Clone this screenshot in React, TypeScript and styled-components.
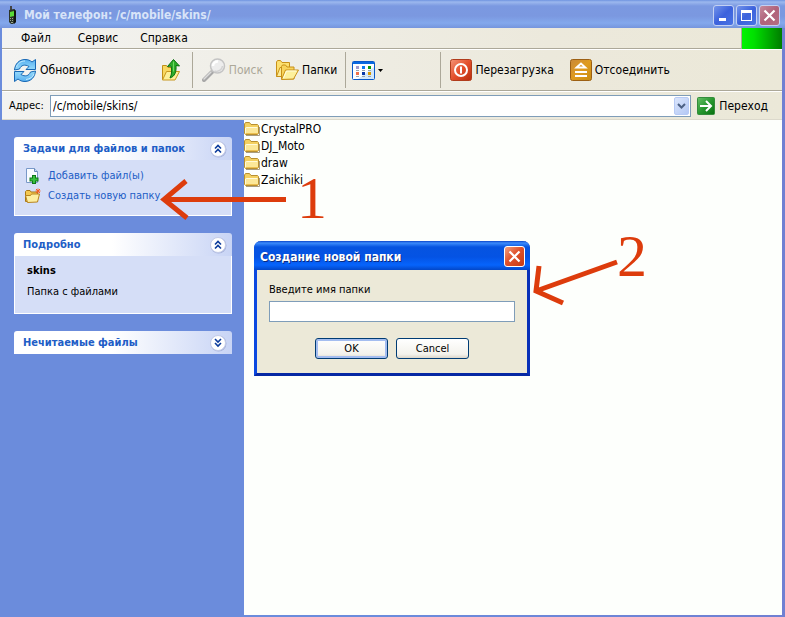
import React from "react";
import styled, { createGlobalStyle, css } from "styled-components";

const GlobalStyle = createGlobalStyle`
  * { box-sizing: border-box; }
  body {
    margin: 0;
    font-family: "DejaVu Sans Condensed", "DejaVu Sans", sans-serif;
    font-size: 12px;
    line-height: 16px;
    color: #000;
  }
  button, input { font: inherit; color: inherit; margin: 0; }
  svg { display: block; flex: none; }
`;

/* ---------- window frame ---------- */

const Window = styled.main`
  display: flex;
  flex-direction: column;
  min-height: 100vh;
  padding: 0 3px 2px 0;
  background: linear-gradient(90deg, #6b8cdc 50%, #7080d2);
`;

const TitleBar = styled.header`
  display: flex;
  align-items: center;
  height: 28px;
  margin-right: -3px;
  padding: 2px 5px 0 7px;
  background: linear-gradient(#6f94e0 0, #9cb8ee 2px, #7b99e1 6px, #7b98e0 16px, #83a8ec 23px, #7595dd 28px);
`;

const WindowTitle = styled.h1`
  flex: 1;
  margin: 0 0 0 6px;
  font-size: 12px;
  line-height: 16px;
  font-weight: 700;
  color: #d8e4f8;
`;

const TitleButtons = styled.div`
  display: flex;
  gap: 2px;
`;

const CaptionButton = styled.button<{ $tone: "blue" | "dim" | "red" }>`
  display: grid;
  place-items: center;
  width: 21px;
  height: 21px;
  padding: 0;
  border: 1px solid #c3d1f3;
  border-radius: 3px;
  color: #fff;
  background: ${({ $tone }) =>
    $tone === "blue"
      ? "linear-gradient(135deg, #7394ea, #3c62dc 50%, #4a74e4)"
      : $tone === "dim"
        ? "linear-gradient(135deg, #c58a9d, #b0627a 50%, #b46d82)"
        : "linear-gradient(135deg, #f0a080, #e0522c 45%, #c63a12)"};
  ${({ $tone }) => $tone === "red" && css`border-color: #fff;`}
`;

/* ---------- bars ---------- */

const barSurface = css`
  margin-left: 2px;
  background: linear-gradient(90deg, #f3f3f1, #ece9dc 70%, #ebe8d8);
`;

const MenuBar = styled.nav`
  ${barSurface}
  display: flex;
  align-items: stretch;
  height: 21px;
  padding-left: 11px;
  border-bottom: 1px solid #aca899;
`;

const MenuItem = styled.button<{ $after?: number }>`
  margin-right: ${({ $after = 0 }) => $after}px;
  padding: 0 8px;
  border: 0;
  background: none;
`;

const Throbber = styled.div`
  width: 41px;
  margin-left: auto;
  margin-bottom: -1px;
  border-left: 1px solid #aca899;
  background: linear-gradient(90deg, #00f400, #00e000 30%, #007c00);
`;

const Toolbar = styled.div`
  ${barSurface}
  display: flex;
  align-items: center;
  height: 42px;
  padding-left: 12px;
  border-top: 1px solid #fff;
  border-bottom: 1px solid #aca899;
`;

const ToolButton = styled.button<{ $after?: number }>`
  display: flex;
  align-items: center;
  gap: 3px;
  height: 36px;
  margin-right: ${({ $after = 0 }) => $after}px;
  padding: 0;
  border: 0;
  background: none;
  white-space: nowrap;
  &:disabled { color: #aca899; }
`;

const Divider = styled.span<{ $after: number }>`
  width: 1px;
  height: 36px;
  margin-right: ${({ $after }) => $after}px;
  background: #aca899;
`;

const AddressBar = styled.form`
  ${barSurface}
  display: flex;
  align-items: center;
  height: 29px;
  padding: 0 14px 0 7px;
  border-top: 1px solid #fff;
  border-bottom: 1px solid #dcd9cc;
`;

const AddressLabel = styled.label`
  width: 41px;
  font-size: 11px;
`;

const AddressCombo = styled.div`
  flex: 1;
  display: flex;
  height: 22px;
  border: 1px solid #7f9db9;
  background: #fff;
`;

const AddressInput = styled.input`
  flex: 1;
  min-width: 0;
  padding: 0 2px;
  border: 0;
  outline: 0;
  background: none;
`;

const ComboArrow = styled.button`
  display: grid;
  place-items: center;
  width: 15px;
  margin: 1px;
  padding: 0;
  border: 1px solid #b7caf5;
  border-radius: 2px;
  background: linear-gradient(135deg, #dbe6fd, #b4c8f4);
`;

const GoButton = styled.button`
  display: flex;
  align-items: center;
  gap: 4px;
  margin-left: 6px;
  padding: 0;
  border: 0;
  background: none;
`;

/* ---------- body ---------- */

const Body = styled.div`
  flex: 1;
  display: flex;
`;

const Sidebar = styled.aside`
  display: flex;
  flex-direction: column;
  gap: 17px;
  width: 244px;
  padding: 17px 12px 17px 14px;
  background: #6b8cdc;
  font-size: 11px;
`;

const PanelHeader = styled.button`
  display: flex;
  align-items: center;
  justify-content: space-between;
  width: 100%;
  height: 23px;
  padding: 0 5px 0 9px;
  border: 0;
  border-radius: 3px 3px 0 0;
  background: linear-gradient(90deg, #fff 45%, #c8d4f5);
  color: #215dc6;
  font-weight: 700;
`;

const PanelBody = styled.div<{ $kind: "tasks" | "details" }>`
  display: flex;
  flex-direction: column;
  gap: ${({ $kind }) => ($kind === "tasks" ? 4 : 5)}px;
  padding: ${({ $kind }) => ($kind === "tasks" ? "8px 10px 11px" : "7px 12px 13px")};
  border: 1px solid #fff;
  border-top: 0;
  background: #d5def7;
`;

const TaskLink = styled.a`
  display: flex;
  align-items: center;
  gap: 7px;
  color: #215dc6;
  text-decoration: none;
  white-space: nowrap;
`;

const DetailName = styled.strong``;

const DetailText = styled.p`
  margin: 0;
`;

const FilePane = styled.section`
  position: relative;
  flex: 1;
  background: #fdfffc;
`;

const FileList = styled.ul`
  margin: 0;
  padding: 0;
  list-style: none;
`;

const FileRow = styled.li`
  display: flex;
  align-items: center;
  gap: 1px;
  height: 17px;
`;

/* ---------- dialog ---------- */

const Dialog = styled.div`
  position: absolute;
  left: 10px;
  top: 121px;
  width: 276px;
  border: 3px solid #0a48e0;
  border-top: 0;
  border-right-color: #0830b8;
  border-bottom-color: #0628a4;
  border-radius: 7px 7px 0 0;
  background: #ece9d8;
`;

const DialogTitleBar = styled.div`
  display: flex;
  align-items: center;
  justify-content: space-between;
  height: 29px;
  margin: 0 -3px;
  padding: 2px 5px 0 6px;
  border-radius: 7px 7px 0 0;
  background: linear-gradient(#0a44c8 0, #3c8cfc 2px, #0654e0 6px, #0453e4 16px, #0664fc 24px, #0347c8 29px);
`;

const DialogTitle = styled.h2`
  margin: 0;
  font-size: 12px;
  line-height: 16px;
  font-weight: 700;
  color: #fff;
  text-shadow: 1px 1px 0 #0a2a80;
`;

const DialogForm = styled.form`
  display: flex;
  flex-direction: column;
  padding: 12px 12px 14px;
  font-size: 11px;
`;

const DialogInput = styled.input`
  width: 100%;
  height: 21px;
  margin: 3px 0 16px;
  padding: 0 3px;
  border: 1px solid #7f9db9;
  border-radius: 0;
  background: #fff;
`;

const DialogActions = styled.div`
  display: flex;
  gap: 8px;
  margin-left: 46px;
`;

const PushButton = styled.button<{ $primary?: boolean }>`
  width: 73px;
  height: 21px;
  padding: 0;
  border: 1px solid #003c74;
  border-radius: 3px;
  background: linear-gradient(#fff, #f3f2ec 80%, #dcd6ca);
  ${({ $primary }) => $primary && css`box-shadow: inset 0 0 0 2px #a4bdf0;`}
`;

/* ---------- annotations ---------- */

const ArrowLayer = styled.svg<{ $x: number; $y: number }>`
  position: absolute;
  left: ${({ $x }) => $x}px;
  top: ${({ $y }) => $y}px;
  pointer-events: none;
  fill: none;
  stroke: #dd3c0c;
  stroke-width: 5;
`;

const StepNumber = styled.span<{ $x: number; $y: number }>`
  position: absolute;
  left: ${({ $x }) => $x}px;
  top: ${({ $y }) => $y}px;
  font: 60px/60px "Liberation Serif", serif;
  color: #dd3c0c;
`;

/* ---------- icons ---------- */

const PhoneIcon = () => (
  <svg width="11" height="18" viewBox="0 0 11 18">
    <path d="M3 0h2v5H3z" fill="#444" />
    <path d="M2 4l5-1 2 2v11l-3 2H4L2 16z" fill="#2c3428" />
    <path d="M7 3l2 2v11l-2 2z" fill="#10140e" />
    <path d="M3 6l4-1v5l-4 1z" fill="#58d838" />
    <path d="M3 12.500h1M5 12.500h1M3 14.500h1M5 14.500h1M4 16.500h2" stroke="#9aa88e" />
  </svg>
);

const MinimizeGlyph = () => (
  <svg width="13" height="13"><path d="M2 9h7v3H2z" fill="currentColor" /></svg>
);
const MaximizeGlyph = () => (
  <svg width="13" height="13">
    <path d="M1 1h11v11H1zM2 4v7h9V4z" fill="currentColor" fillRule="evenodd" />
  </svg>
);
const CloseGlyph = () => (
  <svg width="13" height="13">
    <path d="M1.500 1.500l10 10M11.500 1.500l-10 10" stroke="currentColor" strokeWidth="2.200" />
  </svg>
);

const REFRESH_ARROW = "M.5 11C1 5 5 .5 11 .5c3 0 5 .8 7 2.500L21.500 .5V10.500H12l3-3C11 5 7 6 5.500 10z";

const RefreshIcon = () => (
  <svg width="23" height="23" viewBox="0 0 23 23">
    <defs>
      <linearGradient id="refresh" x2="0" y2="1">
        <stop offset="0" stopColor="#58b0f0" />
        <stop offset="1" stopColor="#98dcfc" />
      </linearGradient>
    </defs>
    <g fill="url(#refresh)" stroke="#1868b4" strokeLinejoin="round">
      <path d={REFRESH_ARROW} />
      <path d={REFRESH_ARROW} transform="rotate(180 11 11.500)" />
    </g>
    <path d="M2.500 8C4 4 7 2 11 2M20 15c-1 3-4 5-8 5.500" stroke="#c4ecff" fill="none" />
  </svg>
);

const UpFolderIcon = () => (
  <svg width="20" height="22" viewBox="0 0 20 22">
    <path d="M1.500 20.500V6.500h4l1.500 2h7v8z" fill="#f8d860" stroke="#c09018" strokeLinejoin="round" />
    <path d="M1.500 21l4-8.500h13l-4.500 8.500z" fill="#fdf098" stroke="#c89820" strokeLinejoin="round" />
    <path d="M6.500 7.500l6-7 6 6.500-3.500-.5c.5 6-1 11-6 12.500 2-4 2-8 1-12z" fill="#2cac28" stroke="#0a7010" strokeLinejoin="round" />
    <path d="M12.500 2.500v10" stroke="#70d868" />
  </svg>
);

const SearchIcon = () => (
  <svg width="24" height="24" viewBox="0 0 24 24">
    <path d="M2 22l8-8" stroke="#a8a8a8" strokeWidth="4" strokeLinecap="round" />
    <path d="M2 21l7-7" stroke="#dcdcdc" strokeWidth="1.500" strokeLinecap="round" />
    <circle cx="15.500" cy="8" r="7" fill="#ededed" stroke="#c4c4c4" strokeWidth="1.500" />
    <path d="M11 8a4.500 4.500 0 0 1 5-4.500" fill="none" stroke="#fff" strokeWidth="2.500" />
    <path d="M12.500 13a6 6 0 0 0 8-5" fill="none" stroke="#d2d2d2" strokeWidth="1.500" />
  </svg>
);

const FoldersIcon = () => (
  <svg width="23" height="21" viewBox="0 0 23 21">
    <g stroke="#c89018" strokeLinejoin="round">
      <path d="M.5 16.500V2l1-1.500h3l1.500 2h7.500v14z" fill="#fce070" />
      <path d="M.5 16.500l3.500-9h11v9z" fill="#fcec98" />
      <path d="M5.500 19V6.500l1-1.500h3l1.500 2h7v12z" fill="#f8d45c" />
      <path d="M5.500 19.500l4-9.500h13l-5 9z" fill="#fdf09c" />
    </g>
    <path d="M7.500 18l3-7h10" stroke="#fffce0" fill="none" />
  </svg>
);

const VIEW_CELLS = [
  [4, 5, "#a098cc"], [10, 5, "#0878f0"], [16, 5, "#089808"],
  [4, 11, "#f07048"], [10, 11, "#0838a8"], [16, 11, "#d89800"],
] as const;

const ViewIcon = () => (
  <svg width="32" height="19" viewBox="0 0 32 19">
    <rect x=".5" y=".5" width="22" height="18" rx="1" fill="#fcfeff" stroke="#0858c8" />
    <path d="M22 6v12H6z" fill="#d4e8fa" />
    <path d="M1 1h21v2H1z" fill="#0868e0" />
    {VIEW_CELLS.map(([x, y, fill]) => (
      <React.Fragment key={`${x}-${y}`}>
        <rect x={x} y={y} width="3" height="3" fill={fill} />
        <path d={`M${x} ${y + 4.5}h3`} stroke="#9aa4ac" />
      </React.Fragment>
    ))}
    <path d="M26 8h5l-2.500 3z" fill="#000" />
  </svg>
);

const PowerIcon = () => (
  <svg width="22" height="22" viewBox="0 0 22 22">
    <defs>
      <linearGradient id="power" x2="1" y2="1">
        <stop offset="0" stopColor="#f49478" />
        <stop offset=".5" stopColor="#e4502c" />
        <stop offset="1" stopColor="#b82c0c" />
      </linearGradient>
    </defs>
    <rect x=".5" y=".5" width="21" height="21" rx="2" fill="url(#power)" stroke="#b03c1c" />
    <circle cx="11" cy="11" r="6" fill="none" stroke="#fff" strokeWidth="2" />
    <path d="M11 7.500v7" stroke="#fff" strokeWidth="2" />
  </svg>
);

const EjectIcon = () => (
  <svg width="22" height="22" viewBox="0 0 22 22">
    <defs>
      <linearGradient id="eject" x2="1" y2="1">
        <stop offset="0" stopColor="#c88838" />
        <stop offset=".5" stopColor="#e09c20" />
        <stop offset="1" stopColor="#c88c10" />
      </linearGradient>
    </defs>
    <rect x=".5" y=".5" width="21" height="21" rx="2" fill="url(#eject)" stroke="#9c6014" />
    <path d="M6.500 8.500L11 4.500l4.500 4z" fill="none" stroke="#fff" strokeWidth="1.800" />
    <path d="M5 13h12M5 17h12" stroke="#fff" strokeWidth="2" />
  </svg>
);

const ChevronDown = () => (
  <svg width="9" height="6" viewBox="0 0 9 6">
    <path d="M1 1l3.500 3.500L8 1" fill="none" stroke="#4d6185" strokeWidth="2" />
  </svg>
);

const GoIcon = () => (
  <svg width="18" height="18" viewBox="0 0 18 18">
    <defs>
      <linearGradient id="go" x2="1" y2="1">
        <stop offset="0" stopColor="#68c068" />
        <stop offset=".5" stopColor="#289830" />
        <stop offset="1" stopColor="#087010" />
      </linearGradient>
    </defs>
    <rect x=".5" y=".5" width="17" height="17" rx="1" fill="url(#go)" stroke="#348c3c" />
    <path d="M3 9h11M9 4l5 5-5 5" fill="none" stroke="#fff" strokeWidth="2" />
  </svg>
);

const CollapseIcon = ({ down = false }: { down?: boolean }) => (
  <svg width="18" height="18" viewBox="0 0 18 18">
    <circle cx="9.500" cy="9.500" r="8" fill="#a8b4dc" />
    <circle cx="9" cy="9" r="7.500" fill="#fff" stroke="#c4cce8" />
    <path
      d={down ? "M6 5l3 3 3-3M6 9l3 3 3-3" : "M6 8.500l3-3 3 3M6 12.500l3-3 3 3"}
      fill="none" stroke="#0c3c9c" strokeWidth="1.600"
    />
  </svg>
);

const AddFileIcon = () => (
  <svg width="16" height="16" viewBox="0 0 16 16">
    <path d="M1.500 .5h8l3 3v11h-11z" fill="#f8fbff" stroke="#7898c8" />
    <path d="M9.500 .5v3h3" fill="#c4dcf4" stroke="#6888b8" />
    <path d="M7 7h4v2.500h2.500v4H11V16H7v-2.500H4.500v-4H7z" fill="#0c7818" />
    <path d="M8 8h2v2.500h2.500v2H10V15H8v-2.500H5.500v-2H8z" fill="#38c040" />
  </svg>
);

const NewFolderIcon = () => (
  <svg width="16" height="16" viewBox="0 0 16 16">
    <path d="M.5 13.500V3.500l1-1h3.500l1 1.500h6.500v9.500z" fill="#f4c850" stroke="#a87818" />
    <path d="M2.500 14.500L.5 7.500h5l1-1.500h8l-2 8z" fill="#fdeea0" stroke="#b88420" strokeLinejoin="round" />
    <path d="M13 .5v5M10.500 3h5M11 1l4 4M15 1l-4 4" stroke="#f46028" />
  </svg>
);

const FolderIcon = () => (
  <svg width="16" height="14" viewBox="0 0 16 14">
    <path d="M2 13.500h13.500V5" stroke="#a89c80" fill="none" />
    <path d="M.5 11.500V2l1-1.500h4l1.500 2h6.500l1 1v8l-1 1h-12z" fill="#f4d060" stroke="#b89030" />
    <path d="M1 6l1-1h11l1 1v5.500l-1 .5H2l-1-.5z" fill="#fce898" />
    <path d="M1.500 11V6l1-.5h11" stroke="#fffbd8" fill="none" />
    <path d="M2 11.500h12" stroke="#ecc050" />
  </svg>
);

/* ---------- page ---------- */

const FOLDERS = ["CrystalPRO", "DJ_Moto", "draw", "Zaichiki"];

export default function App() {
  return (
    <>
      <GlobalStyle />
      <Window>
        <TitleBar>
          <PhoneIcon />
          <WindowTitle>Мой телефон: /c/mobile/skins/</WindowTitle>
          <TitleButtons>
            <CaptionButton type="button" $tone="blue" aria-label="Свернуть"><MinimizeGlyph /></CaptionButton>
            <CaptionButton type="button" $tone="blue" aria-label="Развернуть"><MaximizeGlyph /></CaptionButton>
            <CaptionButton type="button" $tone="dim" aria-label="Закрыть"><CloseGlyph /></CaptionButton>
          </TitleButtons>
        </TitleBar>

        <MenuBar>
          <MenuItem type="button" $after={11}>Файл</MenuItem>
          <MenuItem type="button" $after={6}>Сервис</MenuItem>
          <MenuItem type="button">Справка</MenuItem>
          <Throbber />
        </MenuBar>

        <Toolbar>
          <ToolButton type="button" $after={66}><RefreshIcon />Обновить</ToolButton>
          <ToolButton type="button" $after={11} aria-label="Вверх"><UpFolderIcon /></ToolButton>
          <Divider $after={9} />
          <ToolButton type="button" disabled $after={13}><SearchIcon />Поиск</ToolButton>
          <ToolButton type="button" $after={8}><FoldersIcon />Папки</ToolButton>
          <Divider $after={6} />
          <ToolButton type="button" $after={56} aria-label="Вид"><ViewIcon /></ToolButton>
          <Divider $after={9} />
          <ToolButton type="button" $after={16}><PowerIcon />Перезагрузка</ToolButton>
          <ToolButton type="button"><EjectIcon />Отсоединить</ToolButton>
        </Toolbar>

        <AddressBar onSubmit={(e) => e.preventDefault()}>
          <AddressLabel htmlFor="address">Адрес:</AddressLabel>
          <AddressCombo>
            <AddressInput id="address" type="text" defaultValue="/c/mobile/skins/" />
            <ComboArrow type="button" aria-label="Список адресов"><ChevronDown /></ComboArrow>
          </AddressCombo>
          <GoButton type="submit"><GoIcon />Переход</GoButton>
        </AddressBar>

        <Body>
          <Sidebar>
            <section>
              <PanelHeader type="button">Задачи для файлов и папок<CollapseIcon /></PanelHeader>
              <PanelBody $kind="tasks">
                <TaskLink href="#add"><AddFileIcon />Добавить файл(ы)</TaskLink>
                <TaskLink href="#new"><NewFolderIcon />Создать новую папку</TaskLink>
              </PanelBody>
            </section>
            <section>
              <PanelHeader type="button">Подробно<CollapseIcon /></PanelHeader>
              <PanelBody $kind="details">
                <DetailName>skins</DetailName>
                <DetailText>Папка с файлами</DetailText>
              </PanelBody>
            </section>
            <section>
              <PanelHeader type="button">Нечитаемые файлы<CollapseIcon down /></PanelHeader>
            </section>
          </Sidebar>

          <FilePane>
            <FileList>
              {FOLDERS.map((name) => (
                <FileRow key={name}><FolderIcon />{name}</FileRow>
              ))}
            </FileList>

            <Dialog role="dialog" aria-labelledby="dialog-title">
              <DialogTitleBar>
                <DialogTitle id="dialog-title">Создание новой папки</DialogTitle>
                <CaptionButton type="button" $tone="red" aria-label="Закрыть окно"><CloseGlyph /></CaptionButton>
              </DialogTitleBar>
              <DialogForm onSubmit={(e) => e.preventDefault()}>
                <label htmlFor="folder-name">Введите имя папки</label>
                <DialogInput id="folder-name" type="text" />
                <DialogActions>
                  <PushButton type="submit" $primary>OK</PushButton>
                  <PushButton type="button">Cancel</PushButton>
                </DialogActions>
              </DialogForm>
            </Dialog>

            <ArrowLayer $x={-86} $y={54} width="130" height="50" viewBox="0 0 130 50">
              <path d="M128 25.500H5M28 7L6 25.500L29 44" />
            </ArrowLayer>
            <StepNumber $x={53} $y={48}>1</StepNumber>
            <ArrowLayer $x={286} $y={134} width="92" height="56" viewBox="0 0 92 56">
              <path d="M87 8L6 37M9 12L6 37L33 49" />
            </ArrowLayer>
            <StepNumber $x={373} $y={106}>2</StepNumber>
          </FilePane>
        </Body>
      </Window>
    </>
  );
}
